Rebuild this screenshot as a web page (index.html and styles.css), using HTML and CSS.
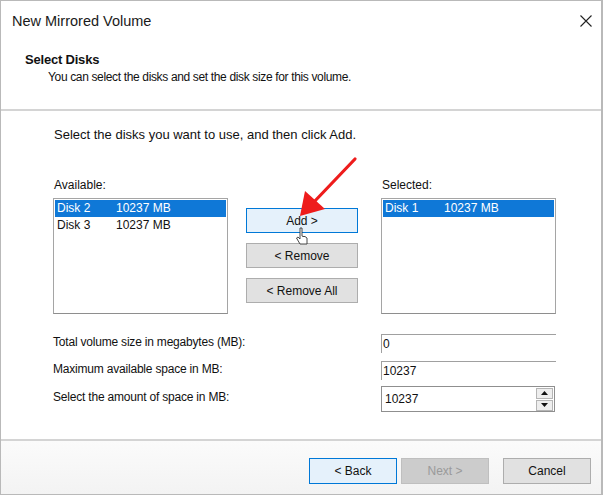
FILE: index.html
```html
<!DOCTYPE html>
<html lang="en">
<head>
    <meta charset="UTF-8">
    <title>New Mirrored Volume</title>
    <link rel="stylesheet" href="styles.css">
</head>
<body>
    <div class="window">
        <div class="titlebar">
            <span class="title">New Mirrored Volume</span>
            <span class="close">
                <svg width="12" height="12" viewBox="0 0 12 12"><path d="M0.5 0.5 L11.5 11.5 M11.5 0.5 L0.5 11.5" stroke="#222" stroke-width="1.1" fill="none"/></svg>
            </span>
        </div>
        <div class="header">
            <h2>Select Disks</h2>
            <p>You can select the disks and set the disk size for this volume.</p>
        </div>

        <div class="content">
            <p class="intro">Select the disks you want to use, and then click Add.</p>

            <div class="picker">
                <div class="col">
                    <label>Available:</label>
                    <div class="listbox">
                        <div class="item selected"><span class="name">Disk 2</span><span>10237 MB</span></div>
                        <div class="item"><span class="name">Disk 3</span><span>10237 MB</span></div>
                    </div>
                </div>
                <div class="actions">
                    <button class="btn focus">Add &gt;</button>
                    <button class="btn">&lt; Remove</button>
                    <button class="btn">&lt; Remove All</button>
                </div>
                <div class="col">
                    <label>Selected:</label>
                    <div class="listbox">
                        <div class="item selected"><span class="name">Disk 1</span><span>10237 MB</span></div>
                    </div>
                </div>
            </div>

            <div class="fields">
                <div class="field-row">
                    <span class="field-label">Total volume size in megabytes (MB):</span>
                    <div class="readonly">0</div>
                </div>
                <div class="field-row">
                    <span class="field-label">Maximum available space in MB:</span>
                    <div class="readonly">10237</div>
                </div>
                <div class="field-row last">
                    <span class="field-label">Select the amount of space in MB:</span>
                    <div class="spin">
                        <span class="spin-value">10237</span>
                        <div class="spin-btns">
                            <span class="arrow"><svg width="7" height="4" viewBox="0 0 7 4"><path d="M0 4 L3.5 0 L7 4 Z" fill="#111"/></svg></span>
                            <span class="arrow"><svg width="7" height="4" viewBox="0 0 7 4"><path d="M0 0 L3.5 4 L7 0 Z" fill="#111"/></svg></span>
                        </div>
                    </div>
                </div>
            </div>
        </div>

        <div class="footer">
            <button class="btn wide focus">&lt; Back</button>
            <button class="btn wide disabled">Next &gt;</button>
            <button class="btn wide cancel">Cancel</button>
        </div>

        <!-- annotation drawn over the screenshot -->
        <svg class="annotation" width="70" height="70" viewBox="0 0 70 70">
            <path d="M58 4 L16 48" stroke="#ee1c1c" stroke-width="3.2" stroke-linecap="round" fill="none"/>
            <path d="M3 61 L8 36 L28 54 Z" fill="#ee1c1c"/>
        </svg>
        <svg class="cursor" width="14" height="20" viewBox="0 0 14 20">
            <path d="M5 1 L5 12 L3 10 L1.5 11 L5 17 L12 17 L12 11 L10 9.5 L8 9.5 L7 9 L7 1 Z" fill="#fff" stroke="#333" stroke-width="0.9"/>
        </svg>
    </div>
</body>
</html>
```

FILE: styles.css
```css
body {
    margin: 0;
    font-family: "Liberation Sans", Arial, sans-serif;
    font-size: 12px;
    color: #111;
    background: #fff;
}
.window {
    position: relative;
    width: 603px;
    height: 495px;
    box-sizing: border-box;
    border: 1px solid #b9b9b9;
    border-right-width: 2px;
    background: #fff;
    display: flex;
    flex-direction: column;
}
.titlebar {
    height: 39px;
    display: flex;
    justify-content: space-between;
    align-items: center;
    padding: 0 9px 0 11px;
    font-size: 14.5px;
    color: #1a1a1a;
}
.close {
    display: flex;
    margin-top: 1px;
}
.header {
    height: 69px;
    padding-left: 24px;
    border-bottom: 2px solid #d4d4d4;
}
.header h2 {
    margin: 12px 0 0;
    font-size: 13px;
    font-weight: bold;
    letter-spacing: -0.2px;
}
.header p {
    margin: 3px 0 0 23px;
    letter-spacing: -0.35px;
}
.content {
    flex: 1;
    padding: 16px 0 0 52px;
    border-bottom: 2px solid #d4d4d4;
}
.intro {
    margin: 0 0 36px 1px;
    font-size: 13px;
}
.picker {
    display: flex;
    align-items: flex-start;
}
.col label {
    display: block;
    margin: 0 0 6px 1px;
}
.listbox {
    width: 175px;
    height: 116px;
    border: 1px solid #a5a5a5;
    border-bottom-color: #8e8e8e;
    padding: 1px;
    box-sizing: border-box;
}
.item {
    height: 17px;
    line-height: 17px;
    padding-left: 2px;
    display: flex;
}
.item .name {
    width: 59px;
}
.item.selected {
    background: #0f78d7;
    color: #fff;
}
.actions {
    width: 112px;
    margin: 30px 23px 0 18px;
    display: flex;
    flex-direction: column;
    gap: 10px;
}
.btn {
    height: 25px;
    font-family: inherit;
    font-size: 12px;
    color: #111;
    background: #e1e1e1;
    border: 1px solid #adadad;
    padding: 0;
}
.btn.focus {
    background: #e5f1fb;
    border: 1px solid #0078d7;
}
.btn.disabled {
    color: #9a9a9a;
    background: #cccccc;
    border-color: #bfbfbf;
}
.fields {
    margin-top: 14px;
}
.field-row {
    display: flex;
    align-items: center;
    height: 27px;
}
.field-row.last {
    margin-top: 1px;
}
.field-label {
    width: 328px;
    letter-spacing: -0.2px;
}
.readonly {
    width: 173px;
    height: 18px;
    line-height: 19px;
    border-top: 1px solid #a0a0a0;
    border-left: 1px solid #a0a0a0;
    padding-left: 1px;
    margin-top: 3px;
}
.spin {
    width: 174px;
    height: 26px;
    box-sizing: border-box;
    border: 1px solid #8f8f8f;
    display: flex;
    align-items: center;
    justify-content: space-between;
    padding: 0 1px 0 3px;
    margin-top: 5px;
}
.spin-btns {
    display: flex;
    flex-direction: column;
    gap: 1px;
}
.arrow {
    width: 15px;
    height: 9px;
    border: 1px solid #b5b5b5;
    background: #eee;
    display: flex;
    align-items: center;
    justify-content: center;
}
.footer {
    height: 53px;
    box-sizing: border-box;
    background: linear-gradient(#fbfbfb, #f3f3f3);
    display: flex;
    align-items: flex-start;
    padding: 17px 0 0 308px;
}
.btn.wide {
    width: 88px;
    height: 26px;
    margin-right: 4px;
}
.btn.cancel {
    margin-left: 10px;
}
.annotation {
    position: absolute;
    left: 296px;
    top: 154px;
}
.cursor {
    position: absolute;
    left: 294px;
    top: 226px;
}
```
